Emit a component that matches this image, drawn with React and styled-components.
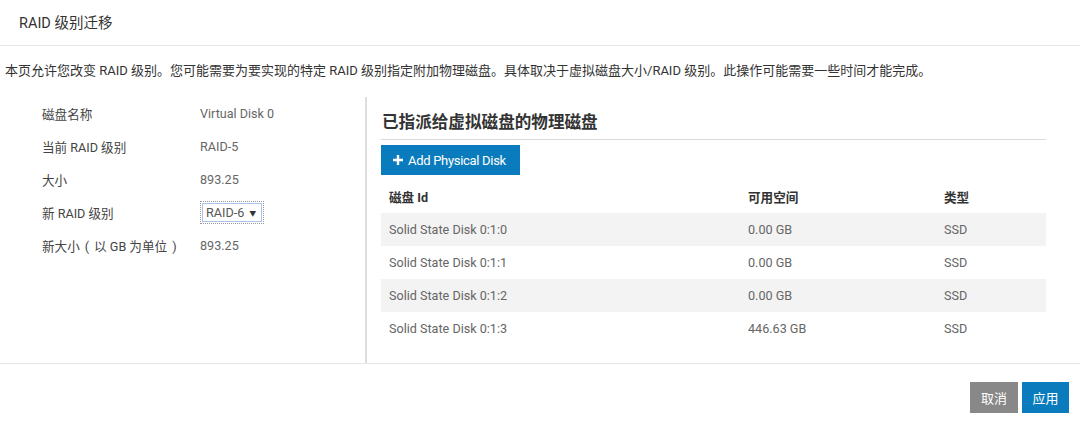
import React from 'react'
import styled, { createGlobalStyle } from 'styled-components'

const GlobalStyle = createGlobalStyle`
  html, body {
    margin: 0;
    padding: 0;
    background: #fff;
  }
  body {
    font-family: Roboto, "Noto Sans CJK SC", "Liberation Sans", sans-serif;
    color: #333;
  }
`;

const Page = styled.div`
  width: 1080px;
  height: 428px;
  display: flex;
  flex-direction: column;
  background: #fff;
`;

const Header = styled.div`
  height: 46px;
  padding-left: 19px;
  display: flex;
  align-items: center;
  border-bottom: 1px solid #e6e6e6;
  font-size: 14.5px;
  color: #333;
  box-sizing: border-box;
  padding-bottom: 2px;
`;

const Description = styled.div`
  padding: 15px 5px 0 5px;
  height: 51px;
  box-sizing: border-box;
  font-size: 13px;
  line-height: 20px;
  color: #333;
  white-space: nowrap;
`;

const Body = styled.div`
  display: flex;
  height: 266px;
  border-bottom: 1px solid #e6e6e6;
`;

const Left = styled.div`
  width: 367px;
  border-right: 2px solid #dedede;
  padding-left: 42px;
  box-sizing: border-box;
`;

const InfoRow = styled.div`
  display: flex;
  align-items: center;
  height: 33px;
  font-size: 12.6px;
`;

const Label = styled.div`
  width: 158px;
  color: #444;
  white-space: nowrap;
`;

const Paren = styled.span`
  margin: 0 5px;
`;

const Value = styled.div`
  color: #666;
`;

const SelectBox = styled.div`
  outline: 1px dotted #999;
  outline-offset: 1px;
  border: 1px solid #a9c4ea;
  margin-left: 2px;
  height: 17px;
  padding: 0 5px 0 3px;
  display: flex;
  align-items: center;
  gap: 5px;
  font-size: 12.6px;
  color: #555;
  white-space: nowrap;
`;

const Caret = styled.span`
  font-size: 7px;
  color: #333;
`;

const Right = styled.div`
  flex: 1;
  padding: 0 34px 0 14px;
`;

const SectionTitle = styled.div`
  padding: 14px 0 4px 1px;
  line-height: 24px;
  font-size: 16.6px;
  font-weight: bold;
  color: #333;
  border-bottom: 1px solid #dadada;
`;

const AddButton = styled.button`
  margin-top: 5px;
  width: 139px;
  height: 30px;
  border: none;
  background: #0a7cbd;
  color: #fff;
  font-family: Roboto, "Noto Sans CJK SC", sans-serif;
  font-size: 13px;
  display: flex;
  align-items: center;
  gap: 4px;
  padding: 0 0 0 11px;
  letter-spacing: -0.3px;
`;

const Table = styled.div`
  margin-top: 5px;
  display: flex;
  flex-direction: column;
`;

const Row = styled.div`
  display: grid;
  grid-template-columns: 359px 196px 1fr;
  height: 33px;
  align-items: center;
  background: ${p => (p.$striped ? '#f3f3f3' : 'transparent')};
  font-size: 12.6px;
  color: ${p => (p.$head ? '#333' : '#666')};
  font-weight: ${p => (p.$head ? 'bold' : 'normal')};
`;

const Cell = styled.div`
  padding-left: 8px;
`;

const Footer = styled.div`
  flex: 1;
  display: flex;
  justify-content: flex-end;
  align-items: flex-start;
  padding: 18px 11px 0 0;
  gap: 4px;
`;

const FooterButton = styled.button`
  height: 31px;
  width: ${p => p.$w}px;
  border: none;
  color: #fff;
  font-family: "Noto Sans CJK SC", sans-serif;
  font-size: 13px;
  background: ${p => (p.$primary ? '#0a7cbd' : '#888')};
  padding: 0;
`;

const info = [
  ['磁盘名称', 'Virtual Disk 0'],
  ['当前 RAID 级别', 'RAID-5'],
  ['大小', '893.25'],
  ['新 RAID 级别', null],
  [<>新大小<Paren>(</Paren>以 GB 为单位<Paren>)</Paren></>, '893.25'],
];

const disks = [
  ['Solid State Disk 0:1:0', '0.00 GB', 'SSD'],
  ['Solid State Disk 0:1:1', '0.00 GB', 'SSD'],
  ['Solid State Disk 0:1:2', '0.00 GB', 'SSD'],
  ['Solid State Disk 0:1:3', '446.63 GB', 'SSD'],
];

const PlusIcon = () => (
  <svg width="12" height="12" viewBox="0 0 12 12">
    <path d="M6 1v10M1 6h10" stroke="#fff" strokeWidth="2.4" />
  </svg>
);

const App = () => {
  return (
    <Page>
      <GlobalStyle />
      <Header>RAID 级别迁移</Header>
      <Description>
        本页允许您改变 RAID 级别。您可能需要为要实现的特定 RAID 级别指定附加物理磁盘。具体取决于虚拟磁盘大小/RAID 级别。此操作可能需要一些时间才能完成。
      </Description>
      <Body>
        <Left>
          {info.map(([label, value], i) => (
            <InfoRow key={i}>
              <Label>{label}</Label>
              {value ? (
                <Value>{value}</Value>
              ) : (
                <SelectBox>
                  RAID-6 <Caret>▼</Caret>
                </SelectBox>
              )}
            </InfoRow>
          ))}
        </Left>
        <Right>
          <SectionTitle>已指派给虚拟磁盘的物理磁盘</SectionTitle>
          <AddButton>
            <PlusIcon />
            Add Physical Disk
          </AddButton>
          <Table>
            <Row $head>
              <Cell>磁盘 Id</Cell>
              <Cell>可用空间</Cell>
              <Cell>类型</Cell>
            </Row>
            {disks.map((d, i) => (
              <Row key={d[0]} $striped={i % 2 === 0}>
                <Cell>{d[0]}</Cell>
                <Cell>{d[1]}</Cell>
                <Cell>{d[2]}</Cell>
              </Row>
            ))}
          </Table>
        </Right>
      </Body>
      <Footer>
        <FooterButton $w={48}>取消</FooterButton>
        <FooterButton $w={47} $primary>应用</FooterButton>
      </Footer>
    </Page>
  )
}

export default App
